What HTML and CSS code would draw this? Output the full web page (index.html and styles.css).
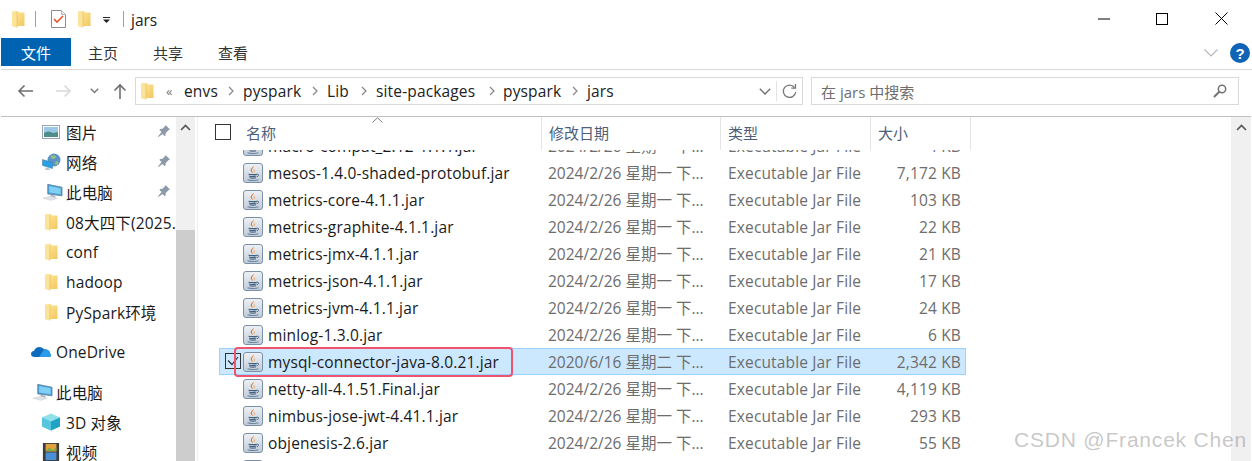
FILE: index.html
```html
<!DOCTYPE html>
<html lang="zh">
<head>
<meta charset="utf-8">
<title>jars</title>
<link rel="stylesheet" href="styles.css">
</head>
<body>
<svg class="defs" width="0" height="0" aria-hidden="true">
  <defs>
    <linearGradient id="fg" x1="0" y1="0" x2="1" y2="1"><stop offset="0" stop-color="#fde9a0"/><stop offset="1" stop-color="#f3c75f"/></linearGradient>
    <linearGradient id="jg" x1="0" y1="0" x2="0" y2="1"><stop offset="0" stop-color="#eef1f5"/><stop offset="1" stop-color="#bfcbd8"/></linearGradient>
    <symbol id="folder" viewBox="0 0 14 18">
      <path d="M2 1h5l1 1.500h5.500v13.500H2z" fill="url(#fg)"/>
      <path d="M1 1.500l5 .8v15.200l-5-1.200z" fill="#fce39a"/>
      <path d="M6 2.300v15.200" stroke="#e6b84f" stroke-width=".6"/>
    </symbol>
    <symbol id="java" viewBox="0 0 20 20">
      <rect x=".5" y=".5" width="19" height="19" rx="2.500" fill="url(#jg)" stroke="#7b8fa6"/>
      <path d="M10.500 2.500c1 2-2.500 3-1.500 5.500 .4 1 1 1.300 1 2-1.500-1-3-2.300-2-4 .7-1.300 2.500-2 2.500-3.500z" fill="#e2691a"/>
      <path d="M12.500 5c-1.500 1-2.300 1.600-1.700 3 .3.600.3 1 0 1.600 1.500-1 1-2 .6-2.600-.3-.7 0-1.200 1.100-2z" fill="#ee9a4d"/>
      <path d="M5.500 11.200c2 .6 7 .6 8.500 0M6 13c2 .5 6 .5 7.500 0M6.500 14.800c2 .4 5 .4 6.500 0" stroke="#42607f" stroke-width="1.100" fill="none"/>
      <path d="M14 11.300c2-.5 2.500 1.500 0 2.500" stroke="#42607f" stroke-width=".9" fill="none"/>
      <path d="M4.500 16.700c3 .9 8 .9 11 0" stroke="#6f86a0" stroke-width="1.100" fill="none"/>
    </symbol>
    <symbol id="pin" viewBox="0 0 14 14">
      <path d="M8.500 1l4.500 4.500-1.300.6-3 2.800-.2 2.600-1 .5-2-2L1.500 13 1 12.500l3.500-4.500-2-2 .5-1 2.600-.2 2.800-3z" fill="#8b99a8"/>
    </symbol>
    <symbol id="pc" viewBox="0 0 22 18">
      <path d="M6 1l15 3v9L6 11z" fill="#4a9fd6" stroke="#5f7f98" stroke-width=".8"/>
      <path d="M7.500 2.700l12 2.400v6.300l-12-2z" fill="#7fd0f4"/>
      <path d="M9 12l5 1v2l-5-1z" fill="#a9b6c1"/>
      <path d="M1 15.500l8-2 7 2.200-7 2z" fill="#dfe4e8" stroke="#c3cad0" stroke-width=".5"/>
    </symbol>
  </defs>
</svg>

<div class="window">
  <header class="titlebar">
    <svg class="qa-folder"><use href="#folder"/></svg>
    <span class="qa-sep"></span>
    <svg class="qa-check" viewBox="0 0 15 18"><path d="M.5.500h10l4 4v13H.5z" fill="#fff" stroke="#8c8c8c"/><path d="M10.500.500v4h4" fill="#eee" stroke="#b5b5b5"/><path d="M3 9l3 3 6-6" fill="none" stroke="#e2572b" stroke-width="1.600"/></svg>
    <svg class="qa-folder qa-folder2"><use href="#folder"/></svg>
    <svg class="qa-drop" viewBox="0 0 7 6"><path d="M0 .500h7" stroke="#222"/><path d="M0 2.500h7L3.500 6z" fill="#222"/></svg>
    <span class="qa-sep qa-sep2"></span>
    <span class="title">jars</span>
    <div class="winctl">
      <svg viewBox="0 0 58 14" class="ctl-min"><path d="M0 7h12" stroke="#000"/></svg>
      <svg viewBox="0 0 12 12" class="ctl-max"><rect x=".5" y=".5" width="11" height="11" fill="none" stroke="#000"/></svg>
      <svg viewBox="0 0 13 13" class="ctl-close"><path d="M.5.500l12 12M12.500.500l-12 12" stroke="#000"/></svg>
    </div>
  </header>

  <nav class="ribbon">
    <span class="tab tab-file">文件</span>
    <span class="tab tab-home">主页</span>
    <span class="tab tab-share">共享</span>
    <span class="tab tab-view">查看</span>
    <svg class="rib-chev" viewBox="0 0 14 8"><path d="M.5.500L7 7 13.500.500" fill="none" stroke="#b5b5b5" stroke-width="1.100"/></svg>
    <svg class="help" viewBox="0 0 20 20"><circle cx="10" cy="10" r="10" fill="#0f64b6"/><text x="10" y="15.500" class="help-q">?</text></svg>
  </nav>

  <div class="addrbar">
    <svg class="nav-back" viewBox="0 0 16 14"><path d="M16 7H2M7.500 1.500L2 7l5.500 5.500" fill="none" stroke="#6e6e6e" stroke-width="1.600"/></svg>
    <svg class="nav-fwd" viewBox="0 0 16 14"><path d="M0 7h14M8.500 1.500L14 7l-5.500 5.500" fill="none" stroke="#d9d9d9" stroke-width="1.600"/></svg>
    <svg class="nav-down" viewBox="0 0 9 6"><path d="M.8.800l3.700 3.700L8.200.8" fill="none" stroke="#7a7a7a" stroke-width="1.500"/></svg>
    <svg class="nav-up" viewBox="0 0 14 16"><path d="M7 16V2M1.500 7.500L7 2l5.500 5.500" fill="none" stroke="#6e6e6e" stroke-width="1.600"/></svg>
    <div class="addr">
      <svg class="addr-folder"><use href="#folder"/></svg>
      <span class="crumb-more">«</span>
      <span class="crumb c1">envs</span><svg class="sep" viewBox="0 0 6 10"><path d="M1 1l4 4-4 4" fill="none" stroke="#8a8a8a" stroke-width="1.300"/></svg>
      <span class="crumb c2">pyspark</span><svg class="sep" viewBox="0 0 6 10"><path d="M1 1l4 4-4 4" fill="none" stroke="#8a8a8a" stroke-width="1.300"/></svg>
      <span class="crumb c3">Lib</span><svg class="sep" viewBox="0 0 6 10"><path d="M1 1l4 4-4 4" fill="none" stroke="#8a8a8a" stroke-width="1.300"/></svg>
      <span class="crumb c4">site-packages</span><svg class="sep" viewBox="0 0 6 10"><path d="M1 1l4 4-4 4" fill="none" stroke="#8a8a8a" stroke-width="1.300"/></svg>
      <span class="crumb c5">pyspark</span><svg class="sep" viewBox="0 0 6 10"><path d="M1 1l4 4-4 4" fill="none" stroke="#8a8a8a" stroke-width="1.300"/></svg>
      <span class="crumb c6">jars</span>
      <svg class="addr-drop" viewBox="0 0 12 7"><path d="M.8.800L6 6l5.200-5.200" fill="none" stroke="#6e6e6e" stroke-width="1.300"/></svg>
      <span class="addr-div"></span>
      <svg class="addr-refresh" viewBox="0 0 15 16"><path d="M12.500 4.500A6.200 6.200 0 1 0 13.700 9" fill="none" stroke="#777" stroke-width="1.300"/><path d="M13.500 1v4.200H9.300" fill="none" stroke="#777" stroke-width="1.300"/></svg>
    </div>
    <div class="search">
      <span class="search-text">在 jars 中搜索</span>
      <svg class="search-icon" viewBox="0 0 14 14"><circle cx="9" cy="5" r="3.700" fill="none" stroke="#737373" stroke-width="1.500"/><path d="M6.300 7.700L1 13" stroke="#737373" stroke-width="2"/></svg>
    </div>
  </div>

  <main class="main">
    <aside class="tree">
      <div class="tree-items">
        <div class="ti l2"><svg class="ti-ic" viewBox="0 0 18 14"><rect x=".5" y=".5" width="17" height="13" fill="#fff" stroke="#9aa5b1"/><rect x="2" y="2" width="14" height="10" fill="#9cc8e6"/><path d="M2 8c3-2 6-2 9 0l5-1v5H2z" fill="#4f8d8a"/></svg><span>图片</span><svg class="pin"><use href="#pin"/></svg></div>
        <div class="ti l2"><svg class="ti-ic ic-net" viewBox="0 0 20 18"><circle cx="12" cy="7" r="6.500" fill="#5b93c9"/><path d="M9 2c2 1 4 0 5 1s-1 3-3 3-3-2-2-4zM14 8c2 0 3 1 2 3s-3 1-3-1z" fill="#8fbe7d"/><path d="M.5 6.500l10 3v6l-10-3z" fill="#29a0e6" stroke="#4b7fa6" stroke-width=".6"/><path d="M4 14.500l4 1.200v1.300H3z" fill="#b9c4cd"/></svg><span>网络</span><svg class="pin"><use href="#pin"/></svg></div>
        <div class="ti l2"><svg class="ti-ic ic-pc"><use href="#pc"/></svg><span>此电脑</span><svg class="pin"><use href="#pin"/></svg></div>
        <div class="ti l2"><svg class="ti-ic ic-fd"><use href="#folder"/></svg><span>08大四下(2025.</span></div>
        <div class="ti l2"><svg class="ti-ic ic-fd"><use href="#folder"/></svg><span>conf</span></div>
        <div class="ti l2"><svg class="ti-ic ic-fd"><use href="#folder"/></svg><span>hadoop</span></div>
        <div class="ti l2"><svg class="ti-ic ic-fd"><use href="#folder"/></svg><span>PySpark环境</span></div>
        <div class="ti l1 gap-top"><svg class="ti-ic ic-od" viewBox="0 0 20 12"><path d="M7 11H3.500C1.500 11 0 9.700 0 8s1.300-3 3-3c.8-2.500 3-4 5.500-4 2 0 3.500 1 4.500 2.300C16.500 3 19 5 19 7.500c.8.500 1 1.200 1 1.800 0 1-.8 1.700-2 1.700z" fill="#0f6cbd"/><path d="M8 11l5-7.500c3.500-.4 6 1.500 6 4 .8.500 1 1.200 1 1.800 0 1-.8 1.700-2 1.700z" fill="#2d9ce8"/></svg><span>OneDrive</span></div>
        <div class="ti l1 gap-top"><svg class="ti-ic ic-pc ic-pc1"><use href="#pc"/></svg><span>此电脑</span></div>
        <div class="ti l2"><svg class="ti-ic" viewBox="0 0 18 17"><path d="M9 0l9 4v9l-9 4-9-4V4z" fill="#8fe0ea"/><path d="M9 8l9-4v9l-9 4z" fill="#1fa3c4"/><path d="M9 8L0 4v9l9 4z" fill="#55c6dc"/></svg><span>3D 对象</span></div>
        <div class="ti l2"><svg class="ti-ic" viewBox="0 0 18 20"><rect width="18" height="20" fill="#3c3c3c"/><rect x="3" y="1" width="12" height="8.500" fill="#e0a23c"/><rect x="3" y="10.500" width="12" height="8.500" fill="#4b90d6"/><path d="M3 9l4-4 4 3 4-3v4z" fill="#79ad49"/></svg><span>视频</span></div>
      </div>
      <div class="vscroll">
        <svg class="up" viewBox="0 0 11 7"><path d="M1 6l4.500-4.500L10 6" fill="none" stroke="#555" stroke-width="1.600"/></svg>
        <div class="thumb"></div>
      </div>
    </aside>

    <section class="list">
      <div class="cols">
        <div class="col col-name"><span class="cb"></span><span>名称</span></div>
        <div class="col col-date">修改日期</div>
        <div class="col col-type">类型</div>
        <div class="col col-size">大小</div>
        <svg class="sort" viewBox="0 0 11 6"><path d="M.5 5.500L5.500.8l5 4.700" fill="none" stroke="#7b7b7b"/></svg>
      </div>
      <div class="rows">
        <div class="row first"><svg class="ji"><use href="#java"/></svg><span class="n">macro-compat_2.12-1.1.1.jar</span><span class="d">2024/2/26 星期一 下...</span><span class="t">Executable Jar File</span><span class="s">4 KB</span></div>
        <div class="row"><svg class="ji"><use href="#java"/></svg><span class="n">mesos-1.4.0-shaded-protobuf.jar</span><span class="d">2024/2/26 星期一 下...</span><span class="t">Executable Jar File</span><span class="s">7,172 KB</span></div>
        <div class="row"><svg class="ji"><use href="#java"/></svg><span class="n">metrics-core-4.1.1.jar</span><span class="d">2024/2/26 星期一 下...</span><span class="t">Executable Jar File</span><span class="s">103 KB</span></div>
        <div class="row"><svg class="ji"><use href="#java"/></svg><span class="n">metrics-graphite-4.1.1.jar</span><span class="d">2024/2/26 星期一 下...</span><span class="t">Executable Jar File</span><span class="s">22 KB</span></div>
        <div class="row"><svg class="ji"><use href="#java"/></svg><span class="n">metrics-jmx-4.1.1.jar</span><span class="d">2024/2/26 星期一 下...</span><span class="t">Executable Jar File</span><span class="s">21 KB</span></div>
        <div class="row"><svg class="ji"><use href="#java"/></svg><span class="n">metrics-json-4.1.1.jar</span><span class="d">2024/2/26 星期一 下...</span><span class="t">Executable Jar File</span><span class="s">17 KB</span></div>
        <div class="row"><svg class="ji"><use href="#java"/></svg><span class="n">metrics-jvm-4.1.1.jar</span><span class="d">2024/2/26 星期一 下...</span><span class="t">Executable Jar File</span><span class="s">24 KB</span></div>
        <div class="row"><svg class="ji"><use href="#java"/></svg><span class="n">minlog-1.3.0.jar</span><span class="d">2024/2/26 星期一 下...</span><span class="t">Executable Jar File</span><span class="s">6 KB</span></div>
        <div class="row selected"><span class="cb cb-on"><svg viewBox="0 0 12 10"><path d="M1 4.500l4 4 6-7.500" fill="none" stroke="#333" stroke-width="1.200"/></svg></span><svg class="ji"><use href="#java"/></svg><span class="n">mysql-connector-java-8.0.21.jar</span><span class="d">2020/6/16 星期二 下...</span><span class="t">Executable Jar File</span><span class="s">2,342 KB</span><span class="mark"></span></div>
        <div class="row"><svg class="ji"><use href="#java"/></svg><span class="n">netty-all-4.1.51.Final.jar</span><span class="d">2024/2/26 星期一 下...</span><span class="t">Executable Jar File</span><span class="s">4,119 KB</span></div>
        <div class="row"><svg class="ji"><use href="#java"/></svg><span class="n">nimbus-jose-jwt-4.41.1.jar</span><span class="d">2024/2/26 星期一 下...</span><span class="t">Executable Jar File</span><span class="s">293 KB</span></div>
        <div class="row"><svg class="ji"><use href="#java"/></svg><span class="n">objenesis-2.6.jar</span><span class="d">2024/2/26 星期一 下...</span><span class="t">Executable Jar File</span><span class="s">55 KB</span></div>
        <div class="row"><svg class="ji"><use href="#java"/></svg></div>
      </div>
    </section>
    <div class="vscroll vscroll-r">
      <svg class="up" viewBox="0 0 11 7"><path d="M1 6l4.500-4.500L10 6" fill="none" stroke="#555" stroke-width="1.600"/></svg>
    </div>
  </main>
  <div class="watermark">CSDN @Francek Chen</div>
</div>
</body>
</html>
```
FILE: styles.css
```css
* { box-sizing: border-box; }
html, body { margin: 0; padding: 0; background: #fff; }
.defs { position: absolute; }
.window {
  position: relative;
  width: 1252px;
  height: 461px;
  overflow: hidden;
  font-family: "Open Sans", "Noto Sans CJK SC", sans-serif;
  font-size: 15.5px;
  letter-spacing: .15px;
  color: #1a1a1a;
  display: flex;
  flex-direction: column;
}

/* title bar */
.titlebar { height: 38px; display: flex; align-items: center; flex: none; padding-left: 11px; }
.qa-folder { width: 14px; height: 18px; }
.qa-sep { width: 1px; height: 16px; background: #a0a0a0; margin-left: 10px; }
.qa-check { width: 15px; height: 18px; margin-left: 15px; }
.qa-folder2 { margin-left: 11px; }
.qa-drop { width: 7px; height: 6px; margin: 2px 0 0 12px; }
.qa-sep2 { margin-left: 13px; }
.title { margin: 2px 0 0 7px; font-size: 15.500px; color: #222; letter-spacing: 0; }
.winctl { margin-left: auto; display: flex; align-items: center; padding-right: 24px; margin-top: -1px; }
.ctl-min { width: 58px; height: 14px; }
.ctl-max { width: 12px; height: 12px; }
.ctl-close { width: 13px; height: 13px; margin-left: 47px; }

/* ribbon */
.ribbon { height: 32px; flex: none; margin-left: 1px; display: flex; border-bottom: 1px solid #d9d9d9; position: relative; font-size: 15px; letter-spacing: 0; align-items: flex-start; }
.tab { height: 28px; line-height: 30px; color: #333; }
.tab-file { width: 70px; background: #0063b1; color: #fff; text-align: center; }
.tab-home { margin-left: 17px; }
.tab-share { margin-left: 35px; }
.tab-view { margin-left: 35px; }
.rib-chev { width: 14px; height: 8px; margin: 11px 0 0 auto; }
.help { width: 20px; height: 20px; margin: 5px 2px 0 12px; }
.help-q { font: bold 15px "Liberation Sans", sans-serif; fill: #fff; text-anchor: middle; }

/* address */
.addrbar { height: 47px; flex: none; margin-left: 1px; margin-right: 1px; display: flex; align-items: center; padding-bottom: 4px; border-bottom: 1px solid #c0c0c0; }
.nav-back { width: 16px; height: 14px; margin-left: 16px; }
.nav-fwd { width: 16px; height: 14px; margin-left: 23px; }
.nav-down { width: 9px; height: 6px; margin-left: 18px; }
.nav-up { width: 14px; height: 16px; margin-left: 14px; }
.addr { margin-left: 8px; width: 668px; height: 28px; border: 1px solid #d9d9d9; display: flex; align-items: center; color: #222; padding-left: 4px; }
.addr-folder { width: 14px; height: 18px; flex: none; }
.crumb-more { margin-left: 12px; width: 18px; color: #777; font-size: 13px; }
.sep { width: 6px; height: 10px; flex: none; }
.crumb { flex: none; }
.c1 { width: 44px; }
.c2 { width: 69px; margin-left: 9px; }
.c3 { width: 34px; margin-left: 9px; }
.c4 { width: 113px; margin-left: 9px; }
.c5 { width: 69px; margin-left: 8px; }
.c6 { width: 30px; margin-left: 9px; }
.addr-drop { width: 12px; height: 7px; margin-left: auto; }
.addr-div { width: 1px; height: 20px; background: #e4e4e4; margin-left: 5px; }
.addr-refresh { width: 15px; height: 16px; margin: 0 5px 0 5px; }
.search { margin-left: 8px; width: 428px; height: 28px; border: 1px solid #d9d9d9; display: flex; align-items: center; padding: 0 11px 0 9px; }
.search-text { color: #6d6d6d; font-size: 15px; letter-spacing: 0; }
.search-icon { width: 14px; height: 14px; margin-left: auto; }

/* main */
.main { flex: 1; min-height: 0; display: flex; }
.tree { width: 198px; flex: none; display: flex; border-right: 1px solid #efefef; }
.tree-items { width: 176px; flex: none; overflow: hidden; }
.ti { height: 30px; display: flex; align-items: center; white-space: nowrap; position: relative; }
.ti span { flex: none; }
.l2 { padding-left: 42px; }
.l1 { padding-left: 31px; }
.gap-top { margin-top: 10px; }
.ti-ic { width: 18px; height: 18px; flex: none; margin-right: 6px; }
.ic-net { width: 20px; margin-right: 4px; }
.ic-fd { width: 14px; height: 18px; margin: 0 8px 0 2px; }
.ic-pc { width: 21px; height: 18px; margin-right: 3px; }
.ic-pc1 { margin-left: 1px; }
.ic-od { width: 20px; height: 12px; margin-right: 5px; }
.pin { width: 14px; height: 14px; position: absolute; left: 157px; top: 7px; }
.vscroll { width: 19px; flex: none; background: #f0f0f0; display: flex; flex-direction: column; align-items: center; }
.up { width: 11px; height: 7px; flex: none; margin-top: 7px; }
.thumb { width: 100%; height: 231px; margin-top: 99px; background: #cdcdcd; flex: none; }
.vscroll-r { width: 20px; margin-right: 1px; }

/* list */
.list { flex: 1; min-width: 0; display: flex; flex-direction: column; }
.cols { height: 33px; flex: none; display: flex; position: relative; color: #4c607a; font-size: 15px; letter-spacing: 0; }
.col { height: 100%; border-right: 1px solid #e5e5e5; display: flex; align-items: center; padding: 0 0 3px 7px; }
.col-name { width: 344px; padding-left: 17px; gap: 15px; }
.col-date { width: 179px; }
.col-type { width: 150px; }
.col-size { width: 100px; }
.sort { position: absolute; left: 174px; top: 0; width: 11px; height: 6px; }
.cb { width: 16px; height: 16px; border: 1px solid #333; display: inline-block; flex: none; background: #fff; }
.rows { flex: 1; min-height: 0; overflow: hidden; padding-left: 21px; }
.row { height: 27px; width: 747px; display: grid; grid-template-columns: 49px 280px 180px 150px 83px; align-items: center; position: relative; }
.first { margin-top: -18px; }
.ji { width: 20px; height: 20px; margin-left: 24px; grid-column: 1; grid-row: 1; }
.n { grid-column: 2; grid-row: 1; white-space: nowrap; }
.d, .t, .s { color: #6d6d6d; white-space: nowrap; }
.d { letter-spacing: 0; }
.s { text-align: right; }
.selected { background: #cce8ff; box-shadow: inset 0 0 0 1px #99d1ff; }
.cb-on { position: absolute; left: 6px; top: 5px; display: flex; align-items: center; justify-content: center; background: transparent; }
.cb-on svg { width: 12px; height: 10px; }
.mark { position: absolute; left: 15px; top: -1px; width: 279px; height: 30px; border: 2.500px solid #ee5470; border-radius: 4px; }

.watermark { position: absolute; left: 1014px; top: 428px; font-family: "Liberation Sans", sans-serif; font-size: 21px; letter-spacing: .8px; color: rgba(120,120,120,.42); white-space: nowrap; }
```
